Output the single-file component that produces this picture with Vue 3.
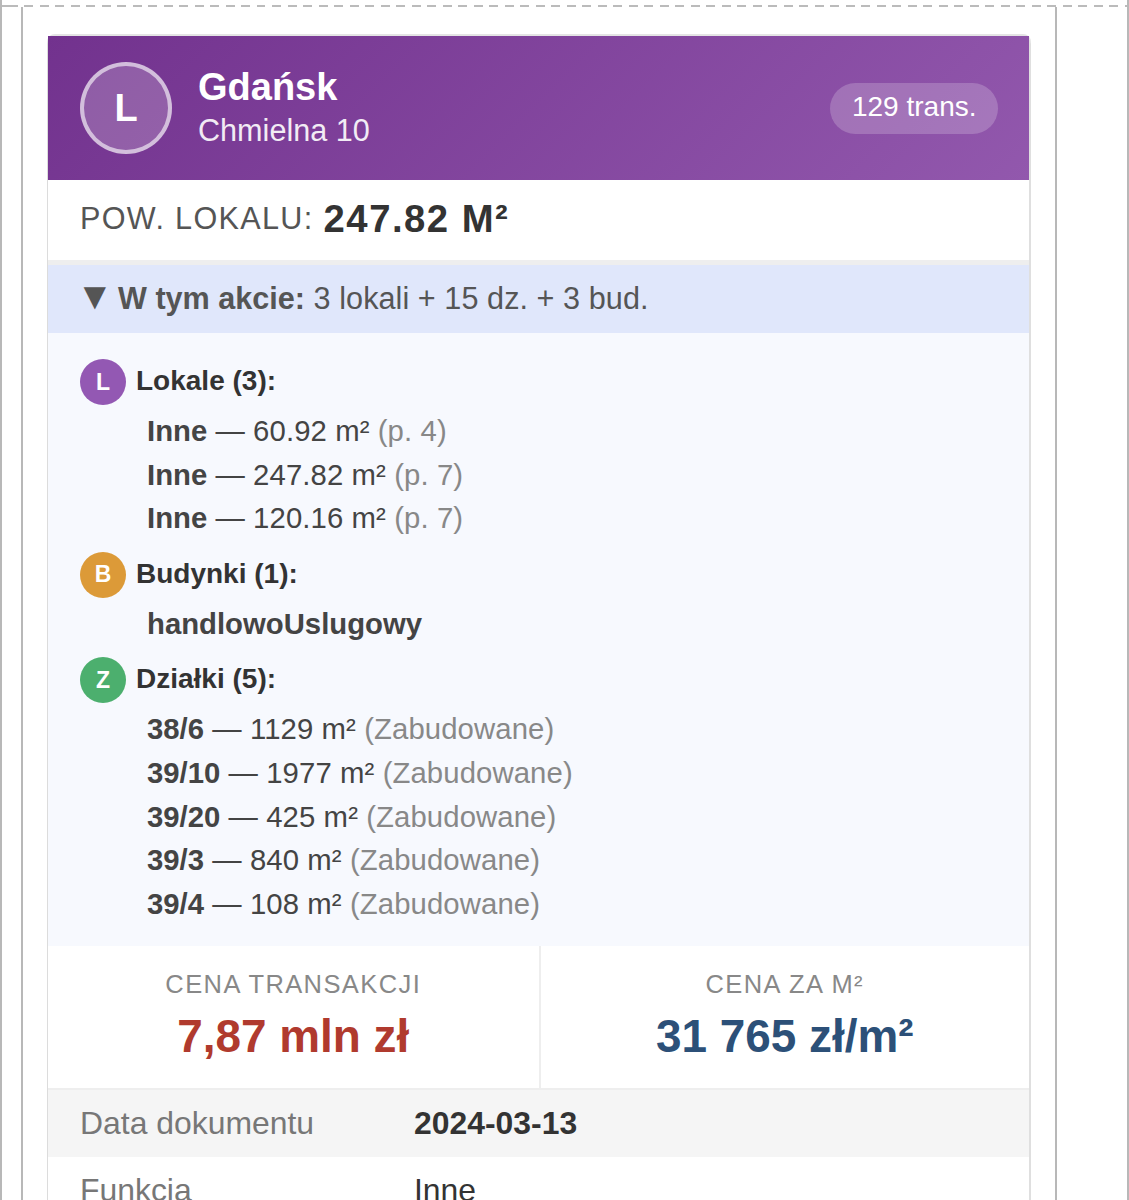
<script setup>
const sections = [
  {
    letter: 'L',
    tone: 'lokal',
    title: 'Lokale (3):',
    rows: [
      { name: 'Inne', value: '60.92 m²', note: '(p. 4)' },
      { name: 'Inne', value: '247.82 m²', note: '(p. 7)' },
      { name: 'Inne', value: '120.16 m²', note: '(p. 7)' },
    ],
  },
  {
    letter: 'B',
    tone: 'budynek',
    title: 'Budynki (1):',
    rows: [{ name: 'handlowoUslugowy' }],
  },
  {
    letter: 'Z',
    tone: 'dzialka',
    title: 'Działki (5):',
    rows: [
      { name: '38/6', value: '1129 m²', note: '(Zabudowane)' },
      { name: '39/10', value: '1977 m²', note: '(Zabudowane)' },
      { name: '39/20', value: '425 m²', note: '(Zabudowane)' },
      { name: '39/3', value: '840 m²', note: '(Zabudowane)' },
      { name: '39/4', value: '108 m²', note: '(Zabudowane)' },
    ],
  },
]

const facts = [
  { label: 'Data dokumentu', value: '2024-03-13', strong: true },
  { label: 'Funkcja', value: 'Inne' },
]
</script>

<template>
  <div class="page">
    <div class="dash"></div>
    <div class="inner">
      <article class="card">
        <header class="card-head">
          <div class="avatar">L</div>
          <div class="head-text">
            <div class="city">Gdańsk</div>
            <div class="street">Chmielna 10</div>
          </div>
          <span class="count">129 trans.</span>
        </header>

        <div class="area">
          <span class="area-label">POW. LOKALU:</span>
          <strong>247.82 M²</strong>
        </div>

        <div class="summary">
          <span class="arrow">▼</span>
          <b>W tym akcie:</b> 3 lokali + 15 dz. + 3 bud.
        </div>

        <div class="details">
          <section v-for="section in sections" :key="section.letter" class="group">
            <div class="group-head">
              <span :class="['dot', section.tone]">{{ section.letter }}</span>
              <span class="group-title">{{ section.title }}</span>
            </div>
            <div v-for="(row, i) in section.rows" :key="i" class="item">
              <b>{{ row.name }}</b>
              <template v-if="row.value"> — {{ row.value }} <span class="note">{{ row.note }}</span></template>
            </div>
          </section>
        </div>

        <div class="prices">
          <div class="price">
            <div class="price-label">CENA TRANSAKCJI</div>
            <div class="price-value total">7,87 mln zł</div>
          </div>
          <div class="price">
            <div class="price-label">CENA ZA M²</div>
            <div class="price-value unit">31 765 zł/m²</div>
          </div>
        </div>

        <div v-for="fact in facts" :key="fact.label" :class="['fact', { shaded: fact.strong }]">
          <span class="fact-label">{{ fact.label }}</span>
          <span :class="['fact-value', { strong: fact.strong }]">{{ fact.value }}</span>
        </div>
      </article>
    </div>
  </div>
</template>

<style>
html, body { background: #fff; }
</style>

<style scoped>
.page {
  height: 1200px;
  overflow: hidden;
  padding: 5px 70px 0 19px;
  box-sizing: border-box;
  border-left: 2px solid #b8b8b8;
  border-right: 2px solid #b8b8b8;
  font-family: "Liberation Sans", Arial, sans-serif;
  background: #fff;
  color: #333;
}
.dash {
  height: 2px;
  margin: 0 -70px 0 -19px;
  background: repeating-linear-gradient(90deg, #bbb 0 8.5px, transparent 8.5px 15.5px);
  background-position-x: 7px;
}
.inner {
  height: 100%;
  border-left: 2px solid #b8b8b8;
  border-right: 2px solid #b8b8b8;
  padding: 29px 24px 0 24px;
}
.card {
  border-left: 1px solid #dcdcdc;
  border-right: 2px solid #dfdfdf;
  border-radius: 8px 8px 0 0;
  box-shadow: 0 -2px 0 #e4e4e4;
}
.card-head {
  display: flex;
  align-items: center;
  height: 144px;
  padding: 0 31px 0 32px;
  box-sizing: border-box;
  background: linear-gradient(135deg, #72328e, #9258ad);
  color: #fff;
}
.avatar {
  width: 92px;
  height: 92px;
  box-sizing: border-box;
  border: 4px solid rgba(255, 255, 255, 0.6);
  border-radius: 50%;
  background: rgba(255, 255, 255, 0.2);
  display: flex;
  align-items: center;
  justify-content: center;
  font-size: 38px;
  font-weight: 700;
  flex-shrink: 0;
}
.head-text {
  margin-left: 26px;
  flex: 1;
}
.city {
  font-size: 38px;
  font-weight: 700;
  line-height: 44px;
}
.street {
  font-size: 30.6px;
  line-height: 42px;
  opacity: 0.9;
}
.count {
  background: rgba(255, 255, 255, 0.2);
  border-radius: 26px;
  padding: 0 21.5px;
  height: 51px;
  line-height: 48px;
  font-size: 28px;
}
.area {
  height: 77px;
  padding: 0 0 3px 32px;
  display: flex;
  align-items: center;
  gap: 10px;
  border-bottom: 5px solid #eee;
}
.area-label {
  font-size: 30.6px;
  letter-spacing: 1.33px;
  color: #555;
}
.area strong {
  font-size: 38.25px;
  letter-spacing: 1.5px;
  color: #333;
}
.summary {
  height: 68px;
  line-height: 66px;
  padding-left: 28px;
  background: #e0e7fb;
  color: #555;
  font-size: 30.6px;
  white-space: nowrap;
  letter-spacing: 0.06px;
}
.summary b {
  letter-spacing: 0;
}
.arrow {
  display: inline-block;
  width: 42px;
  font-size: 38px;
  line-height: 0;
}
.details {
  background: #f7f9fe;
  padding: 26px 32px 21px;
}
.group + .group {
  margin-top: 12px;
}
.group-head {
  display: flex;
  align-items: center;
  gap: 10px;
  height: 46px;
  margin-bottom: 4px;
}
.dot {
  width: 46px;
  height: 46px;
  border-radius: 50%;
  color: #fff;
  font-size: 23px;
  font-weight: 700;
  display: flex;
  align-items: center;
  justify-content: center;
}
.lokal { background: #9358b3; }
.budynek { background: #dc9a38; }
.dzialka { background: #4caf6e; }
.group-title {
  font-size: 28px;
  font-weight: 700;
  color: #333;
  margin-bottom: 2px;
}
.item {
  padding-left: 67px;
  font-size: 29.3px;
  line-height: 43.6px;
  letter-spacing: 0.1px;
  color: #444;
}
.item b {
  color: #444;
  letter-spacing: 0;
}
.note {
  color: #888;
}
.prices {
  display: grid;
  grid-template-columns: 1fr 1fr;
  border-bottom: 2px solid #eee;
}
.price {
  height: 142px;
  box-sizing: border-box;
  padding-top: 22px;
  text-align: center;
}
.price + .price {
  border-left: 2px solid #eee;
}
.price-label {
  font-size: 25.5px;
  letter-spacing: 1.4px;
  line-height: 32px;
  color: #888;
}
.price-value {
  font-size: 45.9px;
  font-weight: 700;
  line-height: 56px;
  margin-top: 8px;
}
.total { color: #b03a2e; }
.unit { color: #2c5078; }
.fact {
  display: flex;
  align-items: center;
  height: 67px;
  padding-left: 32px;
  font-size: 31.9px;
}
.shaded {
  background: #f5f5f5;
}
.fact-label {
  width: 334px;
  color: #777;
}
.fact-value {
  color: #333;
}
.fact-value.strong {
  font-weight: 700;
}
</style>
